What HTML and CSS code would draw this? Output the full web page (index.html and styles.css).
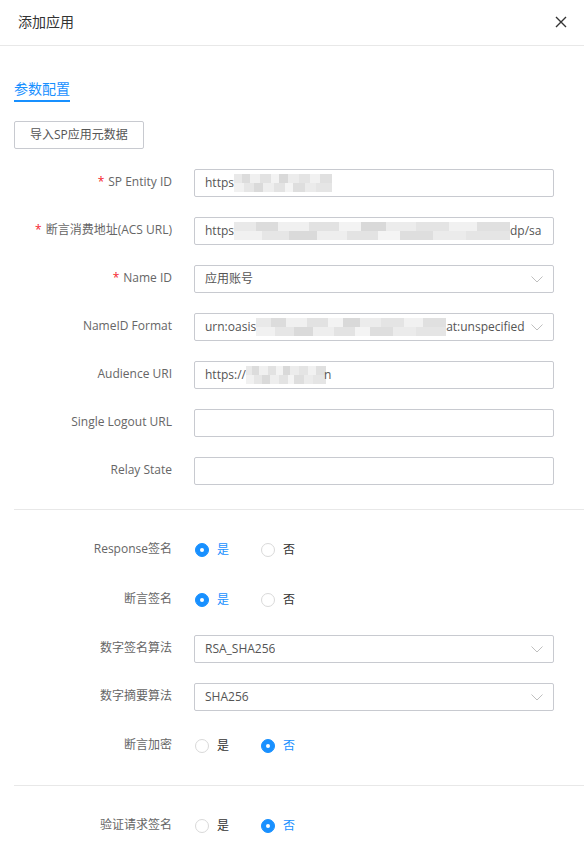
FILE: index.html
```html
<!DOCTYPE html>
<html lang="zh-CN">
<head>
<meta charset="utf-8">
<title>添加应用</title>
<link rel="stylesheet" href="styles.css">
</head>
<body>
<div class="dialog">
  <header class="dlg-header">
    <span class="dlg-title">添加应用</span>
    <svg class="dlg-close" width="12" height="12" viewBox="0 0 12 12"><path d="M1 1L11 11M11 1L1 11" stroke="#333" stroke-width="1.4" fill="none"/></svg>
  </header>
  <div class="dlg-body">
    <div class="tabs"><span class="tab active">参数配置</span></div>
    <button class="btn">导入SP应用元数据</button>

    <div class="form">
      <div class="row">
        <label class="lbl"><span class="req">*</span>SP Entity ID</label>
        <div class="field"><span>https</span><span class="blur b1"></span></div>
      </div>
      <div class="row">
        <label class="lbl"><span class="req">*</span>断言消费地址(ACS URL)</label>
        <div class="field scroll"><span>https</span><span class="blur b2"></span><span>dp/sa</span></div>
      </div>
      <div class="row">
        <label class="lbl"><span class="req">*</span>Name ID</label>
        <div class="field select"><span class="val">应用账号</span><svg class="chev" width="12" height="7" viewBox="0 0 12 7"><path d="M0.5 0.5L6 6L11.5 0.5" stroke="#bfbfbf" stroke-width="1" fill="none"/></svg></div>
      </div>
      <div class="row">
        <label class="lbl">NameID Format</label>
        <div class="field select"><span class="val"><span>urn:oasis</span><span class="blur b3"></span><span>at:unspecified</span></span><svg class="chev" width="12" height="7" viewBox="0 0 12 7"><path d="M0.5 0.5L6 6L11.5 0.5" stroke="#bfbfbf" stroke-width="1" fill="none"/></svg></div>
      </div>
      <div class="row">
        <label class="lbl">Audience URI</label>
        <div class="field"><span>https://</span><span class="blur b4"></span><span class="tail">n</span></div>
      </div>
      <div class="row">
        <label class="lbl">Single Logout URL</label>
        <div class="field"></div>
      </div>
      <div class="row">
        <label class="lbl">Relay State</label>
        <div class="field"></div>
      </div>
    </div>

    <div class="divider"></div>

    <div class="form">
      <div class="row radio-row">
        <label class="lbl">Response签名</label>
        <div class="radios">
          <span class="radio checked"><span class="dot"></span><span class="rtext">是</span></span>
          <span class="radio"><span class="dot"></span><span class="rtext">否</span></span>
        </div>
      </div>
      <div class="row radio-row">
        <label class="lbl">断言签名</label>
        <div class="radios">
          <span class="radio checked"><span class="dot"></span><span class="rtext">是</span></span>
          <span class="radio"><span class="dot"></span><span class="rtext">否</span></span>
        </div>
      </div>
      <div class="row">
        <label class="lbl">数字签名算法</label>
        <div class="field select"><span class="val">RSA_SHA256</span><svg class="chev" width="12" height="7" viewBox="0 0 12 7"><path d="M0.5 0.5L6 6L11.5 0.5" stroke="#bfbfbf" stroke-width="1" fill="none"/></svg></div>
      </div>
      <div class="row">
        <label class="lbl">数字摘要算法</label>
        <div class="field select"><span class="val">SHA256</span><svg class="chev" width="12" height="7" viewBox="0 0 12 7"><path d="M0.5 0.5L6 6L11.5 0.5" stroke="#bfbfbf" stroke-width="1" fill="none"/></svg></div>
      </div>
      <div class="row radio-row">
        <label class="lbl">断言加密</label>
        <div class="radios">
          <span class="radio"><span class="dot"></span><span class="rtext">是</span></span>
          <span class="radio checked"><span class="dot"></span><span class="rtext">否</span></span>
        </div>
      </div>
    </div>

    <div class="divider"></div>

    <div class="form">
      <div class="row radio-row">
        <label class="lbl">验证请求签名</label>
        <div class="radios">
          <span class="radio"><span class="dot"></span><span class="rtext">是</span></span>
          <span class="radio checked"><span class="dot"></span><span class="rtext">否</span></span>
        </div>
      </div>
    </div>
  </div>
</div>
</body>
</html>
```

FILE: styles.css
```css
* { box-sizing: border-box; }
html, body { margin: 0; padding: 0; background: #fff; }
body {
  font-family: "Open Sans", "Noto Sans CJK SC", sans-serif;
  font-size: 12px;
  color: #555;
  width: 584px;
  overflow: hidden;
}
.dlg-header {
  height: 46px;
  border-bottom: 1px solid #e8e8e8;
  display: flex;
  align-items: center;
  justify-content: space-between;
  padding: 0 17px 2px 18px;
}
.dlg-title {
  font-size: 14px;
  color: #333;
  line-height: 20px;
}
.dlg-close { display: block; }
.dlg-body { padding: 0 0 0 14px; }
.tabs { padding-top: 33px; display: flex; }
.tab {
  font-size: 14px;
  line-height: 20px;
  color: #1890ff;
  border-bottom: 2px solid #1890ff;
  padding-bottom: 1px;
}
.btn {
  margin-top: 19px;
  height: 28px;
  padding: 0 15px;
  border: 1px solid #c8cad0;
  border-radius: 2px;
  background: #fff;
  color: #555;
  font-family: inherit;
  font-size: 12px;
  line-height: 26px;
  display: block;
}
.form { display: flex; flex-direction: column; }
.btn + .form { margin-top: 20px; }
.row {
  display: flex;
  align-items: center;
  height: 28px;
  margin-bottom: 20px;
}
.radio-row { height: 30px; }
.lbl {
  width: 158px;
  margin-right: 22px;
  text-align: right;
  color: #666;
  line-height: 16px;
  white-space: nowrap;
  position: relative;
  top: -1px;
}
.req { color: #f5222d; margin-right: 4px; }
.field {
  width: 360px;
  height: 28px;
  border: 1px solid #c8cad0;
  border-radius: 2px;
  padding: 0 10px;
  display: flex;
  align-items: center;
  overflow: hidden;
  white-space: nowrap;
  color: #555;
  line-height: 18px;
}
.field.scroll { padding-right: 2px; }
.field > span { flex: none; }
.select { justify-content: space-between; padding-right: 10px; }
.select .val { display: flex; align-items: center; overflow: hidden; }
.chev { flex: none; display: block; }
.blur {
  display: inline-block;
  height: 18px;
  flex: none;
  background:
    linear-gradient(90deg, #e9e9e9 0 8%, #dcdcdc 8% 16%, #f0f0f0 16% 27%, #e2e2e2 27% 38%, #f3f3f3 38% 46%, #d9d9d9 46% 55%, #ececec 55% 66%, #e4e4e4 66% 78%, #f1f1f1 78% 88%, #e0e0e0 88% 100%) top / 100% 50% no-repeat,
    linear-gradient(90deg, #f1f1f1 0 10%, #e6e6e6 10% 20%, #dadada 20% 30%, #eeeeee 30% 41%, #e3e3e3 41% 52%, #f4f4f4 52% 60%, #dedede 60% 72%, #ebebeb 72% 84%, #e5e5e5 84% 100%) bottom / 100% 50% no-repeat;
}
.b1 { width: 98px; }
.b2 { width: 276px; }
.b3 { width: 190px; }
.b4 { width: 80px; }
.tail { margin-left: -2px; }
.radios { display: flex; align-items: center; padding-left: 1px; }
.radio {
  display: flex;
  align-items: center;
  margin-right: 32px;
  color: #333;
}
.radio .dot {
  width: 14px;
  height: 14px;
  border-radius: 50%;
  border: 1px solid #d9d9d9;
  background: #fff;
  position: relative;
}
.radio.checked .dot {
  border-color: #1890ff;
  background: #1890ff;
}
.radio.checked .dot::after {
  content: "";
  position: absolute;
  left: 4px;
  top: 4px;
  width: 4px;
  height: 4px;
  border-radius: 50%;
  background: #fff;
}
.radio.checked .rtext { color: #1890ff; }
.rtext { margin-left: 8px; line-height: 16px; }
.divider {
  height: 1px;
  background: #e8e8e8;
  margin: 4px 0 25px;
}
```
